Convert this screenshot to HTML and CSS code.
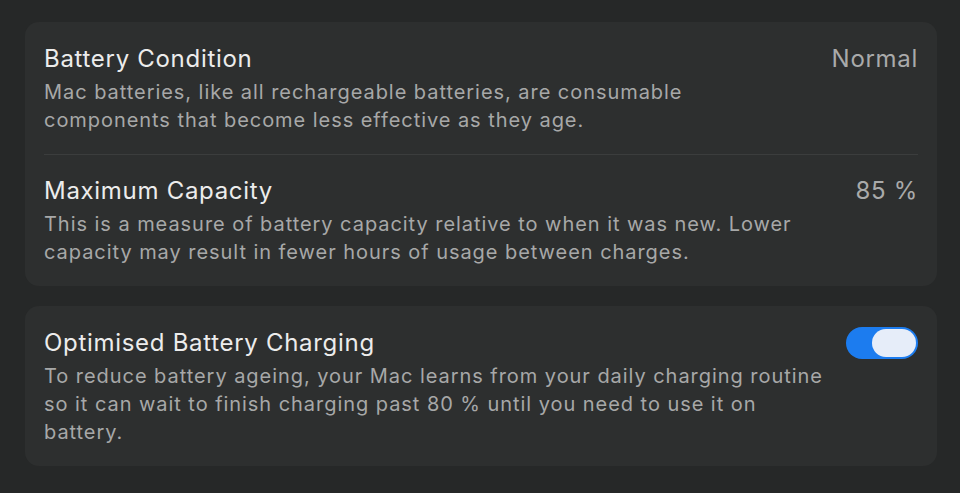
FILE: index.html
```html
<!DOCTYPE html>
<html lang="en">
<head>
<meta charset="utf-8">
<link rel="stylesheet" href="styles.css">
</head>
<body>
<main class="page">
  <section class="card">
    <div class="row">
      <div class="text">
        <div class="title">Battery Condition</div>
        <div class="desc">Mac batteries, like all rechargeable batteries, are consumable<br>components that become less effective as they age.</div>
      </div>
      <div class="value">Normal</div>
    </div>
    <div class="sep"></div>
    <div class="row">
      <div class="text">
        <div class="title">Maximum Capacity</div>
        <div class="desc">This is a measure of battery capacity relative to when it was new. Lower<br>capacity may result in fewer hours of usage between charges.</div>
      </div>
      <div class="value">85 %</div>
    </div>
  </section>
  <section class="card">
    <div class="row">
      <div class="text">
        <div class="title">Optimised Battery Charging</div>
        <div class="desc">To reduce battery ageing, your Mac learns from your daily charging routine<br>so it can wait to finish charging past 80 % until you need to use it on<br>battery.</div>
      </div>
      <div class="toggle"><div class="knob"></div></div>
    </div>
  </section>
</main>
</body>
</html>
```
FILE: styles.css
```css
html, body {
  margin: 0;
  padding: 0;
  background: #262828;
}
body {
  width: 960px;
  height: 493px;
  overflow: hidden;
  font-family: "Inter", "Liberation Sans", sans-serif;
}
.page {
  display: flex;
  flex-direction: column;
  gap: 20px;
  padding: 22px 23px 0 25px;
}
.card {
  background: #2d2f2f;
  border-radius: 14px;
  padding: 22px 19px 20px 19px;
}
.row {
  display: flex;
  justify-content: space-between;
  align-items: flex-start;
}
.sep {
  height: 1px;
  background: #3b3d3d;
  margin: 20px 0 21px;
}
.title {
  font-size: 24px;
  line-height: 30px;
  letter-spacing: 0.7px;
  color: #ececec;
}
.desc {
  margin-top: 4px;
  font-size: 20px;
  line-height: 28px;
  letter-spacing: 0.95px;
  color: #a7a8a8;
}
.value {
  font-size: 24px;
  line-height: 30px;
  letter-spacing: 0.7px;
  color: #a9aaaa;
}
.toggle {
  width: 72px;
  height: 32px;
  border-radius: 16px;
  background: #1c7cef;
  display: flex;
  justify-content: flex-end;
  align-items: center;
  padding: 0 2px;
  box-sizing: border-box;
  margin-top: -1px;
}
.knob {
  width: 44px;
  height: 28px;
  border-radius: 14px;
  background: #e6edf9;
}
```
